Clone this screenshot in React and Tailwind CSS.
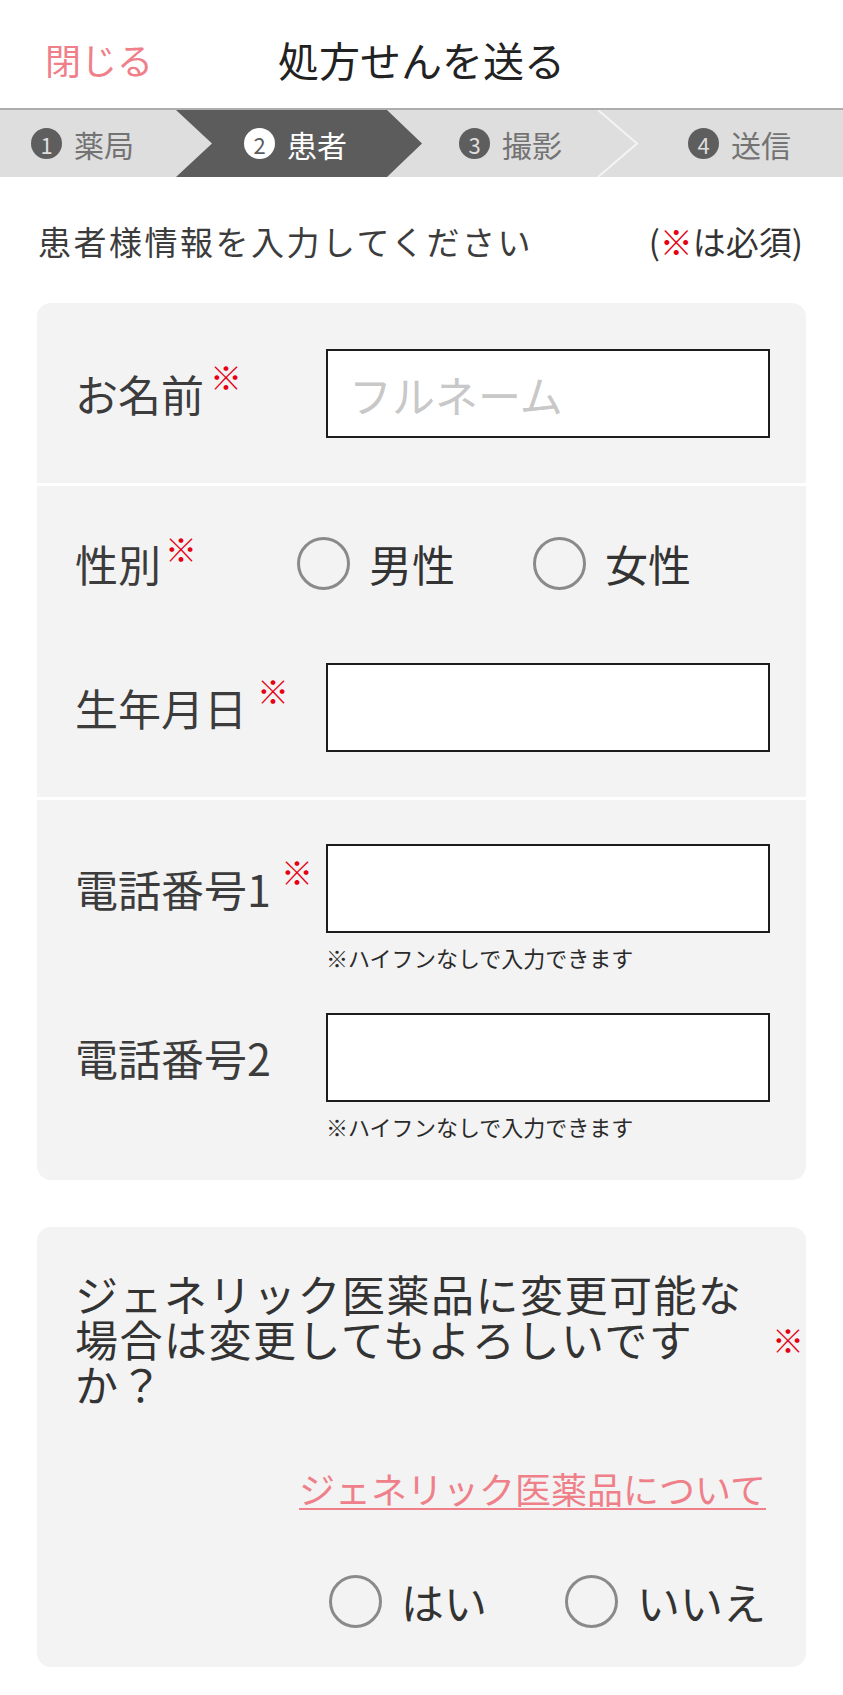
import { useState } from "react";

const steps = [
    { no: 1, label: "薬局", width: "w-[213px]" },
    { no: 2, label: "患者", width: "w-[215px]", active: true },
    { no: 3, label: "撮影", width: "w-[229px]" },
    { no: 4, label: "送信", width: "flex-1" },
];

function Req({ className = "" }) {
    return <span className={"text-[32px] leading-none text-[#e60012] " + className}>※</span>;
}

function Radio({ name, label, checked, onChange }) {
    return (
        <label className="flex items-center gap-[19px] cursor-pointer">
            <input
                type="radio"
                name={name}
                checked={checked}
                onChange={onChange}
                className="appearance-none w-[53px] h-[53px] rounded-full border-[3px] border-[#8a8a8a] checked:border-[14px] checked:border-[#666]"
            />
            <span className="text-[43px] leading-none text-[#333]">{label}</span>
        </label>
    );
}

function FieldRow({ label, required, hint, placeholder, reqClass = "ml-[6px]" }) {
    return (
        <div className="flex items-start">
            <div className="w-[251px] h-[89px] flex items-center">
                <span className="text-[43px] leading-none text-[#3c3c3c]">{label}</span>
                {required && <Req className={"self-start mt-[11px] " + reqClass} />}
            </div>
            <div className="flex-1 flex flex-col">
                <input
                    placeholder={placeholder}
                    className="h-[89px] w-full bg-white border-2 border-[#1c1c1c] px-[21px] text-[43px] text-[#333] outline-none placeholder:text-[#c8c8c8]"
                />
                {hint && <p className="mt-[8px] text-[22px] leading-[33px] text-[#2a2a2a]">{hint}</p>}
            </div>
        </div>
    );
}

export default function App() {
    const [gender, setGender] = useState(null);
    const [generic, setGeneric] = useState(null);

    return (
        <div className="w-[843px] bg-white font-['Noto_Sans_CJK_JP','Noto_Sans',sans-serif] pb-[28px]">
            {/* header */}
            <header className="h-[108px] grid grid-cols-[1fr_auto_1fr] items-center pt-[10px] px-[45px]">
                <button className="justify-self-start text-[36px] leading-none text-[#ef8089]">閉じる</button>
                <h1 className="text-[41px] leading-none text-[#222]">処方せんを送る</h1>
                <div />
            </header>

            {/* steps */}
            <div className="relative h-[69px] border-t-2 border-[#adadad] bg-[#dedede]">
                <svg className="absolute inset-0 w-full h-full" viewBox="0 0 843 67" preserveAspectRatio="none">
                    <polygon points="176,0 387,0 422,33.5 387,67 176,67 212,33.5" fill="#5c5c5c" />
                    <polyline points="598,0 637,33.5 598,67" fill="none" stroke="#f4f4f4" strokeWidth="2" />
                </svg>
                <div className="relative flex h-full items-center">
                    {steps.map((s) => (
                        <div key={s.no} className={s.width + " flex items-center gap-[12px] pl-[31px]"}>
                            <span
                                className={
                                    "w-[31px] h-[31px] shrink-0 rounded-full flex items-center justify-center text-[22px] leading-none " +
                                    (s.active ? "bg-white text-[#5c5c5c]" : "bg-[#5e5e5e] text-[#dedede]")
                                }
                            >
                                {s.no}
                            </span>
                            <span className={"text-[30px] leading-none " + (s.active ? "text-white" : "text-[#737373]")}>
                                {s.label}
                            </span>
                        </div>
                    ))}
                </div>
            </div>

            {/* subtitle */}
            <div className="h-[126px] flex items-center justify-between pl-[38px] pr-[40px] pt-[2px]">
                <p className="text-[33px] tracking-[2.5px] leading-none text-[#3c3c3c]">患者様情報を入力してください</p>
                <p className="text-[33px] leading-none text-[#333]">
                    (<span className="text-[#e60012]">※</span>は必須)
                </p>
            </div>

            {/* patient card */}
            <section className="mx-[37px] rounded-[14px] bg-[#f3f3f3] overflow-hidden">
                <div className="pt-[46px] pb-[45px] pl-[38px] pr-[36px]">
                    <FieldRow label="お名前" required placeholder="フルネーム" reqClass="ml-[6px]" />
                </div>
                <div className="h-[3px] bg-white" />
                <div className="pt-[51px] pb-[45px] pl-[38px] pr-[36px]">
                    <div className="flex items-center h-[53px]">
                        <div className="w-[222px] flex items-center">
                            <span className="text-[43px] leading-none text-[#3c3c3c]">性別</span>
                            <Req className="self-start -mt-[10px] ml-[4px]" />
                        </div>
                        <div className="flex items-center gap-[78px]">
                            <Radio name="gender" label="男性" checked={gender === "m"} onChange={() => setGender("m")} />
                            <Radio name="gender" label="女性" checked={gender === "f"} onChange={() => setGender("f")} />
                        </div>
                    </div>
                    <div className="mt-[73px]">
                        <FieldRow label="生年月日" required reqClass="ml-[10px]" />
                    </div>
                </div>
                <div className="h-[3px] bg-white" />
                <div className="pt-[44px] pb-[37px] pl-[38px] pr-[36px]">
                    <FieldRow label="電話番号1" required hint="※ハイフンなしで入力できます" reqClass="ml-[10px]" />
                    <div className="mt-[39px]">
                        <FieldRow label="電話番号2" hint="※ハイフンなしで入力できます" />
                    </div>
                </div>
            </section>

            {/* generic card */}
            <section className="mx-[37px] mt-[47px] rounded-[14px] bg-[#f3f3f3] pt-[44px] pb-[39px] pl-[38px] pr-[40px]">
                <div className="flex items-center">
                    <p className="w-[692px] text-[43px] tracking-[1.5px] leading-[45px] text-[#333]">
                        ジェネリック医薬品に変更可能な場合は変更してもよろしいですか？
                    </p>
                    <Req className="ml-auto -mr-[38px]" />
                </div>
                <div className="mt-[59px] flex justify-end">
                    <a href="#" className="text-[36px] leading-[47px] text-[#ef8089] underline decoration-2 underline-offset-[4px]">
                        ジェネリック医薬品について
                    </a>
                </div>
                <div className="mt-[63px] flex justify-end items-center gap-[78px]">
                    <Radio name="generic" label="はい" checked={generic === "y"} onChange={() => setGeneric("y")} />
                    <Radio name="generic" label="いいえ" checked={generic === "n"} onChange={() => setGeneric("n")} />
                </div>
            </section>
        </div>
    );
}
